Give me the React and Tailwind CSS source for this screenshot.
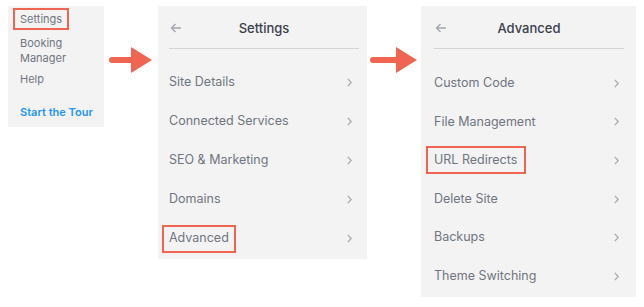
import React from "react";

const font = { fontFamily: "Inter, 'Noto Sans', sans-serif" };

const Arrow = ({ w }) => (
  <svg width={w} height="26" viewBox={`0 0 ${w} 26`}>
    <rect x="0" y="10" width={w - 18} height="6" rx="3" fill="#f06552" />
    <polygon points={`${w - 21},0 ${w},13 ${w - 21},26`} fill="#f06552" />
  </svg>
);

const BackArrow = () => (
  <svg width="12" height="12" viewBox="0 0 12 12" fill="none" stroke="#a3a7ae" strokeWidth="1.4">
    <path d="M11 6 H1.5 M5.5 2 L1.5 6 L5.5 10" />
  </svg>
);

const Chevron = () => (
  <svg width="5" height="9" viewBox="0 0 5 9" fill="none" stroke="#a3a7ae" strokeWidth="1.2">
    <path d="M0.8 0.8 L4.2 4.5 L0.8 8.2" />
  </svg>
);

const Panel = ({ title, items, boxed, pl, pr, chevPr, w, h, rowH, first, boxShift, boxPad }) => (
  <div className={`${w} ${h} bg-[#f3f3f3] flex flex-col`}>
    <div className={`${pl} ${pr}`}>
      <div className="relative h-[43px] pt-[3px] flex items-center justify-center border-b border-[#d4d4d6]">
        <span className="absolute left-[1px] top-[16px]">
          <BackArrow />
        </span>
        <span className="text-[13px] text-[#3a404b] font-medium">{title}</span>
      </div>
    </div>
    <div className={`${first} flex flex-col`}>
      {items.map((item) => (
        <div key={item} className={`${rowH} flex items-center justify-between ${pl} ${chevPr}`}>
          {item === boxed ? (
            <span
              className={`${boxShift} ${boxPad} h-[28px] flex items-center border-2 border-[#f06552] text-[12.5px] text-[#6f757f]`}
            >
              {item}
            </span>
          ) : (
            <span className="text-[12.5px] text-[#6f757f]">{item}</span>
          )}
          <Chevron />
        </div>
      ))}
    </div>
  </div>
);

export default function App() {
  return (
    <div className="w-[644px] h-[307px] bg-white flex items-start pt-[6px] pl-2" style={font}>
      {/* Sidebar */}
      <div className="w-[96px] h-[121px] bg-[#f3f3f3] pt-[2px] pl-[5px] text-[11px] text-[#707680]">
        <div className="w-[56px] h-[22px] border-2 border-[#f06552] pl-[5px] flex items-center">
          Settings
        </div>
        <div className="ml-[7px] mt-[6px] leading-[15px]">
          Booking
          <br />
          Manager
        </div>
        <div className="ml-[7px] mt-[6px] leading-[15px]">Help</div>
        <div className="ml-[7px] mt-[18px] leading-[15px] font-semibold text-[#2196f3]">
          Start the Tour
        </div>
      </div>

      <div className="ml-[5px] mt-[41px]">
        <Arrow w={43} />
      </div>

      <div className="ml-[6px]">
        <Panel
          title="Settings"
          items={["Site Details", "Connected Services", "SEO & Marketing", "Domains", "Advanced"]}
          boxed="Advanced"
          w="w-[209px]"
          h="h-[253px]"
          pl="pl-[11px]"
          pr="pr-[8px]"
          chevPr="pr-[15px]"
          rowH="h-[39px]"
          first="mt-[14px]"
          boxShift="ml-[-7px]"
          boxPad="px-[5px]"
        />
      </div>

      <div className="ml-[3px] mt-[41px]">
        <Arrow w={47} />
      </div>

      <div className="ml-[4px]">
        <Panel
          title="Advanced"
          items={["Custom Code", "File Management", "URL Redirects", "Delete Site", "Backups", "Theme Switching"]}
          boxed="URL Redirects"
          w="w-[215px]"
          h="h-[291px]"
          pl="pl-[13px]"
          pr="pr-[12px]"
          chevPr="pr-[17px]"
          rowH="h-[38.6px]"
          first="mt-[15px]"
          boxShift="ml-[-8px]"
          boxPad="pl-[6px] pr-[7px]"
        />
      </div>
    </div>
  );
}
